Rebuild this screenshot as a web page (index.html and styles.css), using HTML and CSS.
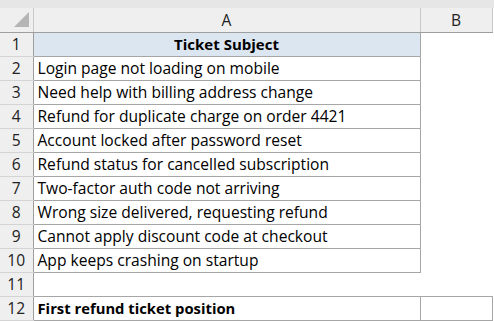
FILE: index.html
```html
<!DOCTYPE html>
<html lang="en">
<head>
    <meta charset="UTF-8">
    <title>Ticket Subjects</title>
    <link rel="stylesheet" href="styles.css">
</head>
<body>
    <div class="topbar"></div>
    <table class="sheet">
        <colgroup>
            <col class="col-rownum">
            <col class="col-a">
            <col class="col-b">
        </colgroup>
        <thead>
            <tr>
                <th class="corner">
                    <svg width="16" height="16" viewBox="0 0 16 16"><polygon points="15,0 15,15 0,15" fill="#b5b5b5"/></svg>
                </th>
                <th class="colhead">A</th>
                <th class="colhead">B</th>
            </tr>
        </thead>
        <tbody>
            <tr><th class="rownum">1</th><td class="cell title">Ticket Subject</td><td></td></tr>
            <tr><th class="rownum">2</th><td class="cell">Login page not loading on mobile</td><td></td></tr>
            <tr><th class="rownum">3</th><td class="cell">Need help with billing address change</td><td></td></tr>
            <tr><th class="rownum">4</th><td class="cell">Refund for duplicate charge on order 4421</td><td></td></tr>
            <tr><th class="rownum">5</th><td class="cell">Account locked after password reset</td><td></td></tr>
            <tr><th class="rownum">6</th><td class="cell">Refund status for cancelled subscription</td><td></td></tr>
            <tr><th class="rownum">7</th><td class="cell">Two-factor auth code not arriving</td><td></td></tr>
            <tr><th class="rownum">8</th><td class="cell">Wrong size delivered, requesting refund</td><td></td></tr>
            <tr><th class="rownum">9</th><td class="cell">Cannot apply discount code at checkout</td><td></td></tr>
            <tr><th class="rownum">10</th><td class="cell">App keeps crashing on startup</td><td></td></tr>
            <tr><th class="rownum">11</th><td></td><td></td></tr>
            <tr><th class="rownum">12</th><td class="cell label">First refund ticket position</td><td class="cell"></td></tr>
        </tbody>
    </table>
</body>
</html>
```

FILE: styles.css
```css
body {
    margin: 0;
    background-color: white;
    font-family: "Open Sans", "Noto Sans", sans-serif;
    font-size: 15.6px;
    color: #000;
}

.topbar {
    height: 8px;
    background-color: #e6e6e6;
}

.sheet {
    border-collapse: collapse;
    table-layout: fixed;
    width: 492px;
}

.col-rownum {
    width: 33px;
}

.col-a {
    width: 387px;
}

.col-b {
    width: 72px;
}

.sheet tr {
    height: 24px;
}

.sheet th,
.sheet td {
    padding: 0;
    line-height: 20px;
    white-space: nowrap;
    overflow: hidden;
}

.sheet .corner {
    background-color: #efefef;
    border-right: 1px solid #c8c8c8;
    border-bottom: 1px solid #9e9e9e;
    text-align: right;
    vertical-align: bottom;
    line-height: 0;
}

.corner svg {
    margin: 0 3px 4px 0;
}

.colhead {
    background-color: #efefef;
    border-right: 1px solid #c8c8c8;
    border-bottom: 1px solid #9e9e9e;
    font-weight: normal;
    color: #222;
    text-align: center;
}

.rownum {
    background-color: #efefef;
    border-right: 1px solid #9e9e9e;
    border-bottom: 1px solid #d4d4d4;
    font-weight: normal;
    color: #222;
    text-align: center;
}

.sheet .cell {
    border: 1px solid #a6a6a6;
    padding: 0 4px;
}

.title {
    background-color: #dce6f1;
    font-weight: bold;
    font-size: 15px;
    text-align: center;
}

.label {
    font-weight: bold;
    font-size: 14.8px;
}
```
